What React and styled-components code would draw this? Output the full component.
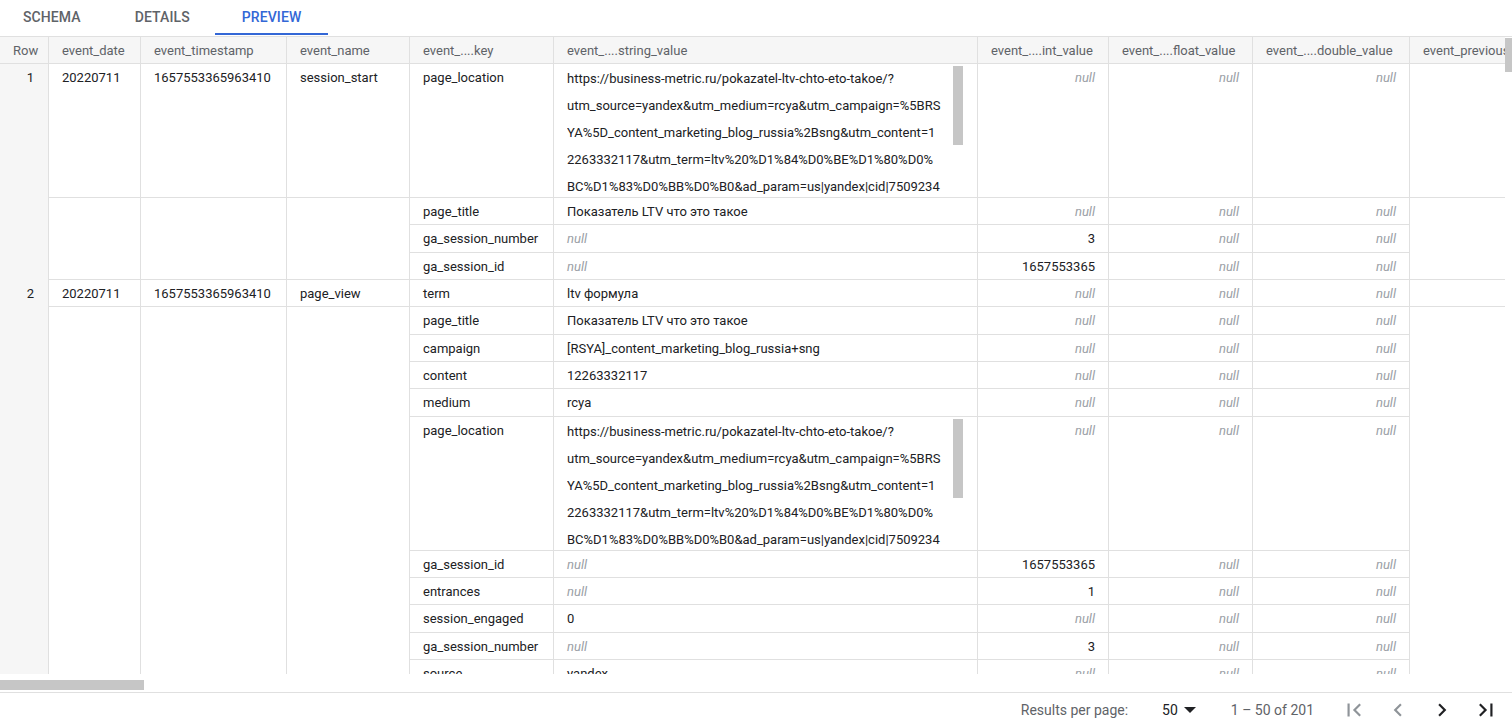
import React from 'react';
import styled, { createGlobalStyle } from 'styled-components';

const GlobalStyle = createGlobalStyle`
  html, body {
    margin: 0;
    padding: 0;
    background: #fff;
    overflow: hidden;
  }
  body {
    font-family: Roboto, "Liberation Sans", Arial, sans-serif;
    color: #202124;
  }
`;

// Row | date | timestamp | name | key | string | int | float | double | previous...
const COLS = '49px 92px 146px 123px 144px 424px 131px 144px 157px 1fr';

const Page = styled.div`
  display: flex;
  flex-direction: column;
  width: 1512px;
  height: 727px;
`;

const TabBar = styled.div`
  display: flex;
  flex: none;
  height: 37px;
  box-sizing: border-box;
  border-bottom: 1px solid #e0e0e0;
`;

const Tab = styled.div`
  height: 35px;
  box-sizing: border-box;
  display: flex;
  align-items: center;
  padding: 0 27px;
  font-size: 14px;
  font-weight: 500;
  letter-spacing: 0.1px;
  color: ${p => (p.$active ? '#3367d6' : '#5f6368')};
  border-bottom: 2px solid ${p => (p.$active ? '#3367d6' : 'transparent')};

  &:first-child {
    padding-left: 23px;
  }
  &:last-child {
    margin-left: -2px;
  }
`;

/* table viewport with its own scroll tracks */
const Viewport = styled.div`
  flex: 1;
  min-height: 0;
  display: grid;
  grid-template-columns: 1fr 7px;
  grid-template-rows: 1fr 18px;
`;

const Clip = styled.div`
  overflow: hidden;
  min-width: 0;
  min-height: 0;
`;

const VTrack = styled.div`
  background: #fff;
`;

const VThumb = styled.div`
  margin-top: 1px;
  height: 34px;
  background: #c6c6c6;
`;

const HTrack = styled.div`
  grid-column: 1 / span 2;
  background: #fff;
  padding-top: 6px;
`;

const HThumb = styled.div`
  width: 144px;
  height: 10px;
  background: #c6c6c6;
`;

const Table = styled.div`
  width: 1800px;
`;

const HeadRow = styled.div`
  display: grid;
  grid-template-columns: ${COLS};
  height: 27px;
  background: #f6f6f6;
`;

const HeadCell = styled.div`
  box-sizing: border-box;
  min-width: 0;
  padding: 1px 13px 0;
  font-size: 13px;
  line-height: 25px;
  color: #5f6368;
  white-space: nowrap;
  overflow: hidden;
  text-align: ${p => (p.$center ? 'center' : 'left')};
  border-right: 1px solid #e0e0e0;
  border-bottom: 1px solid #e0e0e0;
`;

const SubRow = styled.div`
  display: grid;
  grid-template-columns: ${COLS};
  height: ${p => p.$h}px;
`;

const Cell = styled.div`
  box-sizing: border-box;
  min-width: 0;
  padding: 1px 13px 0;
  font-size: 13px;
  line-height: 26.33px;
  color: #202124;
  white-space: nowrap;
  overflow: hidden;
  text-align: ${p => (p.$num ? 'right' : 'left')};
  border-right: 1px solid #e0e0e0;
  border-bottom: ${p => (p.$open ? 'none' : '1px solid #e0e0e0')};
`;

const RowNum = styled(Cell)`
  background: #f6f6f6;
  border-bottom: none;
  text-align: right;
  padding-right: 14px;
`;

const LongCell = styled(Cell)`
  display: flex;
  padding-top: 0;
  padding-right: 14px;
`;

const LongText = styled.div`
  flex: 1;
  min-width: 0;
  overflow: hidden;
  padding-top: 1px;
  line-height: 27px;
`;

const LongTrack = styled.div`
  flex: none;
  width: 10px;
  padding-top: 2px;
`;

const LongThumb = styled.div`
  height: 79px;
  background: #c6c6c6;
`;

const Null = styled.span`
  font-style: italic;
  color: #9aa0a6;
`;

const Footer = styled.div`
  flex: none;
  height: 35px;
  box-sizing: border-box;
  border-top: 1px solid #e0e0e0;
  display: flex;
  align-items: center;
  justify-content: flex-end;
  padding-right: 4px;
  font-size: 14px;
  color: #5f6368;
`;

const PerPage = styled.div`
  margin-right: 34px;
`;

const PageSize = styled.div`
  display: flex;
  align-items: center;
  gap: 6px;
  color: #202124;
  margin-right: 35px;
`;

const Range = styled.div`
  margin-right: 18px;
`;

const IconBtn = styled.div`
  width: 44px;
  height: 34px;
  display: flex;
  align-items: center;
  justify-content: center;
  color: ${p => (p.$disabled ? '#8f9499' : '#202124')};
`;

const Icon = ({ d }) => (
  <svg width="26" height="26" viewBox="0 0 24 24" fill="currentColor">
    <path d={d} />
  </svg>
);

const ICONS = {
  first: 'M18.41 16.59L13.82 12l4.59-4.59L17 6l-6 6 6 6zM6 6h2v12H6z',
  prev: 'M15.41 7.41L14 6l-6 6 6 6 1.41-1.41L10.83 12z',
  next: 'M10 6L8.59 7.41 13.17 12l-4.58 4.59L10 18l6-6z',
  last: 'M5.59 7.41L10.18 12l-4.59 4.59L7 18l6-6-6-6zM16 6h2v12h-2z',
};

const URL_LINES = [
  'https://business-metric.ru/pokazatel-ltv-chto-eto-takoe/?',
  'utm_source=yandex&utm_medium=rcya&utm_campaign=%5BRS',
  'YA%5D_content_marketing_blog_russia%2Bsng&utm_content=1',
  '2263332117&utm_term=ltv%20%D1%84%D0%BE%D1%80%D0%',
  'BC%D1%83%D0%BB%D0%B0&ad_param=us|yandex|cid|7509234',
];

const TITLE = 'Показатель LTV что это такое';

const records = [
  {
    row: 1,
    date: '20220711',
    ts: '1657553365963410',
    name: 'session_start',
    params: [
      { key: 'page_location', str: URL_LINES },
      { key: 'page_title', str: TITLE },
      { key: 'ga_session_number', str: null, int: '3' },
      { key: 'ga_session_id', str: null, int: '1657553365' },
    ],
  },
  {
    row: 2,
    date: '20220711',
    ts: '1657553365963410',
    name: 'page_view',
    params: [
      { key: 'term', str: 'ltv формула' },
      { key: 'page_title', str: TITLE },
      { key: 'campaign', str: '[RSYA]_content_marketing_blog_russia+sng' },
      { key: 'content', str: '12263332117' },
      { key: 'medium', str: 'rcya' },
      { key: 'page_location', str: URL_LINES },
      { key: 'ga_session_id', str: null, int: '1657553365' },
      { key: 'entrances', str: null, int: '1' },
      { key: 'session_engaged', str: '0' },
      { key: 'ga_session_number', str: null, int: '3' },
      { key: 'source', str: 'yandex' },
      { key: 'engaged_session_event', str: null, int: '1' },
    ],
  },
];

const val = v => (v == null ? <Null>null</Null> : v);

const Record = ({ rec }) =>
  rec.params.map((p, i) => {
    const long = Array.isArray(p.str);
    const edge = i === 0 || i === rec.params.length - 1;
    const first = i === 0;
    return (
      <SubRow key={i} $h={long ? 134 : 27.33}>
        <RowNum>{first ? rec.row : ''}</RowNum>
        <Cell $open={!edge}>{first ? rec.date : ''}</Cell>
        <Cell $open={!edge}>{first ? rec.ts : ''}</Cell>
        <Cell $open={!edge}>{first ? rec.name : ''}</Cell>
        <Cell>{p.key}</Cell>
        {long ? (
          <LongCell>
            <LongText>
              {p.str.map((line, j) => (
                <div key={j}>{line}</div>
              ))}
            </LongText>
            <LongTrack>
              <LongThumb />
            </LongTrack>
          </LongCell>
        ) : (
          <Cell>{val(p.str)}</Cell>
        )}
        <Cell $num>{val(p.int)}</Cell>
        <Cell $num>{val(p.float)}</Cell>
        <Cell $num>{val(p.dbl)}</Cell>
        <Cell $open={!edge} />
      </SubRow>
    );
  });

const HEADS = [
  'event_date',
  'event_timestamp',
  'event_name',
  'event_....key',
  'event_....string_value',
  'event_....int_value',
  'event_....float_value',
  'event_....double_value',
  'event_previous_timestamp',
];

export default function App() {
  return (
    <Page>
      <GlobalStyle />
      <TabBar>
        <Tab>SCHEMA</Tab>
        <Tab>DETAILS</Tab>
        <Tab $active>PREVIEW</Tab>
      </TabBar>

      <Viewport>
        <Clip>
          <Table>
            <HeadRow>
              <HeadCell $center>Row</HeadCell>
              {HEADS.map(h => (
                <HeadCell key={h}>{h}</HeadCell>
              ))}
            </HeadRow>
            {records.map(r => (
              <Record key={r.row} rec={r} />
            ))}
          </Table>
        </Clip>
        <VTrack>
          <VThumb />
        </VTrack>
        <HTrack>
          <HThumb />
        </HTrack>
      </Viewport>

      <Footer>
        <PerPage>Results per page:</PerPage>
        <PageSize>
          50
          <svg width="12" height="6" viewBox="0 0 10 5" fill="currentColor">
            <path d="M0 0l5 5 5-5z" />
          </svg>
        </PageSize>
        <Range>1 – 50 of 201</Range>
        <IconBtn $disabled>
          <Icon d={ICONS.first} />
        </IconBtn>
        <IconBtn $disabled>
          <Icon d={ICONS.prev} />
        </IconBtn>
        <IconBtn>
          <Icon d={ICONS.next} />
        </IconBtn>
        <IconBtn>
          <Icon d={ICONS.last} />
        </IconBtn>
      </Footer>
    </Page>
  );
}
